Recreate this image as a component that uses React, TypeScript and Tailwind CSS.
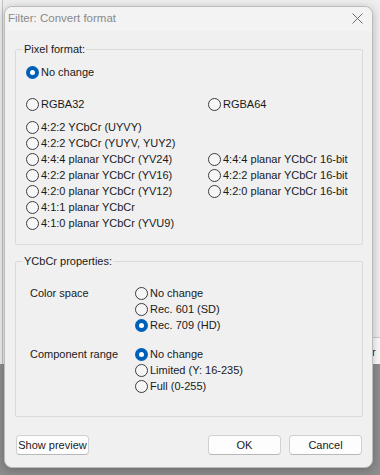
import React from 'react';

const Radio: React.FC<{ checked?: boolean; label: string }> = ({ checked, label }) => (
  <div className="flex h-4 items-center gap-[2px] whitespace-nowrap">
    {checked ? (
      <span className="flex h-[13px] w-[13px] shrink-0 items-center justify-center rounded-full bg-[#005fb8]">
        <span className="h-[5px] w-[5px] rounded-full bg-white" />
      </span>
    ) : (
      <span className="h-[13px] w-[13px] shrink-0 rounded-full border border-[#3c3c3c] bg-[#f6f6f6]" />
    )}
    <span>{label}</span>
  </div>
);

const Button: React.FC<{ children: React.ReactNode }> = ({ children }) => (
  <button className="flex h-[20px] w-[73px] items-center justify-center whitespace-nowrap rounded-[4px] border border-[#d0d0d0] border-b-[#b8b8b8] bg-[#fdfdfd] text-[11px] text-[#1a1a1a]">
    {children}
  </button>
);

export default function App() {
  return (
    <div className="relative h-[475px] w-[380px] overflow-hidden bg-[#8d8d8d] pl-[4px] pt-[6px] font-['Liberation_Sans',Arial,sans-serif] text-[11px] text-[#1a1a1a]">
      {/* desktop behind the dialog */}
      <div className="absolute left-0 top-0 h-[364px] w-[380px] bg-[#eeeeee]" />
      <div className="absolute left-[2px] top-0 h-[364px] w-px bg-[#c4c4c4]" />
      <div className="absolute right-0 top-[337px] h-[27px] w-[10px] border-t border-[#c9c9c9] bg-[#fafafa]">
        <span className="absolute left-[2px] top-[6px] text-[11px] text-[#1a1a1a]">r</span>
      </div>

      <div className="relative z-10 flex h-[462px] w-[369px] flex-col rounded-[8px] border border-[#bcbcbc] bg-[#f0f0f0] shadow-[0_2px_10px_rgba(0,0,0,0.25)]">
        <div className="flex h-[24px] items-center justify-between rounded-t-[8px] bg-[#f3f3f3] pl-[3px] pr-[9px]">
          <span className="text-[11.5px] text-[#8a8a8a]">Filter: Convert format</span>
          <svg width="11" height="11" viewBox="0 0 11 11" className="mb-[2px]">
            <path d="M0.5 0.5 L10.5 10.5 M10.5 0.5 L0.5 10.5" stroke="#6e6e6e" strokeWidth="1" fill="none" />
          </svg>
        </div>

        <fieldset className="ml-[10px] mt-[10px] w-[348px] rounded-[2px] border border-[#dadada] pb-[13px] pl-[10px] pt-[7px]">
          <legend className="-ml-[3px] px-[1px] leading-4">Pixel format:</legend>
          <div className="grid grid-cols-[182px_1fr]">
            <div className="col-span-2">
              <Radio checked label="No change" />
            </div>
            <div className="mt-[16px]">
              <Radio label="RGBA32" />
            </div>
            <div className="mt-[16px]">
              <Radio label="RGBA64" />
            </div>
            <div className="col-span-2 mt-[7px]">
              <Radio label="4:2:2 YCbCr (UYVY)" />
            </div>
            <div className="col-span-2">
              <Radio label="4:2:2 YCbCr (YUYV, YUY2)" />
            </div>
            <Radio label="4:4:4 planar YCbCr (YV24)" />
            <Radio label="4:4:4 planar YCbCr 16-bit" />
            <Radio label="4:2:2 planar YCbCr (YV16)" />
            <Radio label="4:2:2 planar YCbCr 16-bit" />
            <Radio label="4:2:0 planar YCbCr (YV12)" />
            <Radio label="4:2:0 planar YCbCr 16-bit" />
            <div className="col-span-2">
              <Radio label="4:1:1 planar YCbCr" />
            </div>
            <div className="col-span-2">
              <Radio label="4:1:0 planar YCbCr (YVU9)" />
            </div>
          </div>
        </fieldset>

        <fieldset className="ml-[10px] mt-[8px] w-[348px] rounded-[2px] border border-[#dadada] pb-[22px] pl-[14px] pt-[16px]">
          <legend className="-ml-[7px] px-[1px] leading-4">YCbCr properties:</legend>
          <div className="grid grid-cols-[105px_1fr]">
            <div className="flex h-4 items-center">Color space</div>
            <div className="flex flex-col">
              <Radio label="No change" />
              <Radio label="Rec. 601 (SD)" />
              <Radio checked label="Rec. 709 (HD)" />
            </div>
            <div className="mt-[13px] flex h-4 items-center">Component range</div>
            <div className="mt-[13px] flex flex-col">
              <Radio checked label="No change" />
              <Radio label="Limited (Y: 16-235)" />
              <Radio label="Full (0-255)" />
            </div>
          </div>
        </fieldset>

        <div className="ml-[11px] mr-[10px] mt-[18px] flex items-center justify-between">
          <Button>Show preview</Button>
          <div className="flex gap-[8px]">
            <Button>OK</Button>
            <Button>Cancel</Button>
          </div>
        </div>
      </div>
    </div>
  );
}
